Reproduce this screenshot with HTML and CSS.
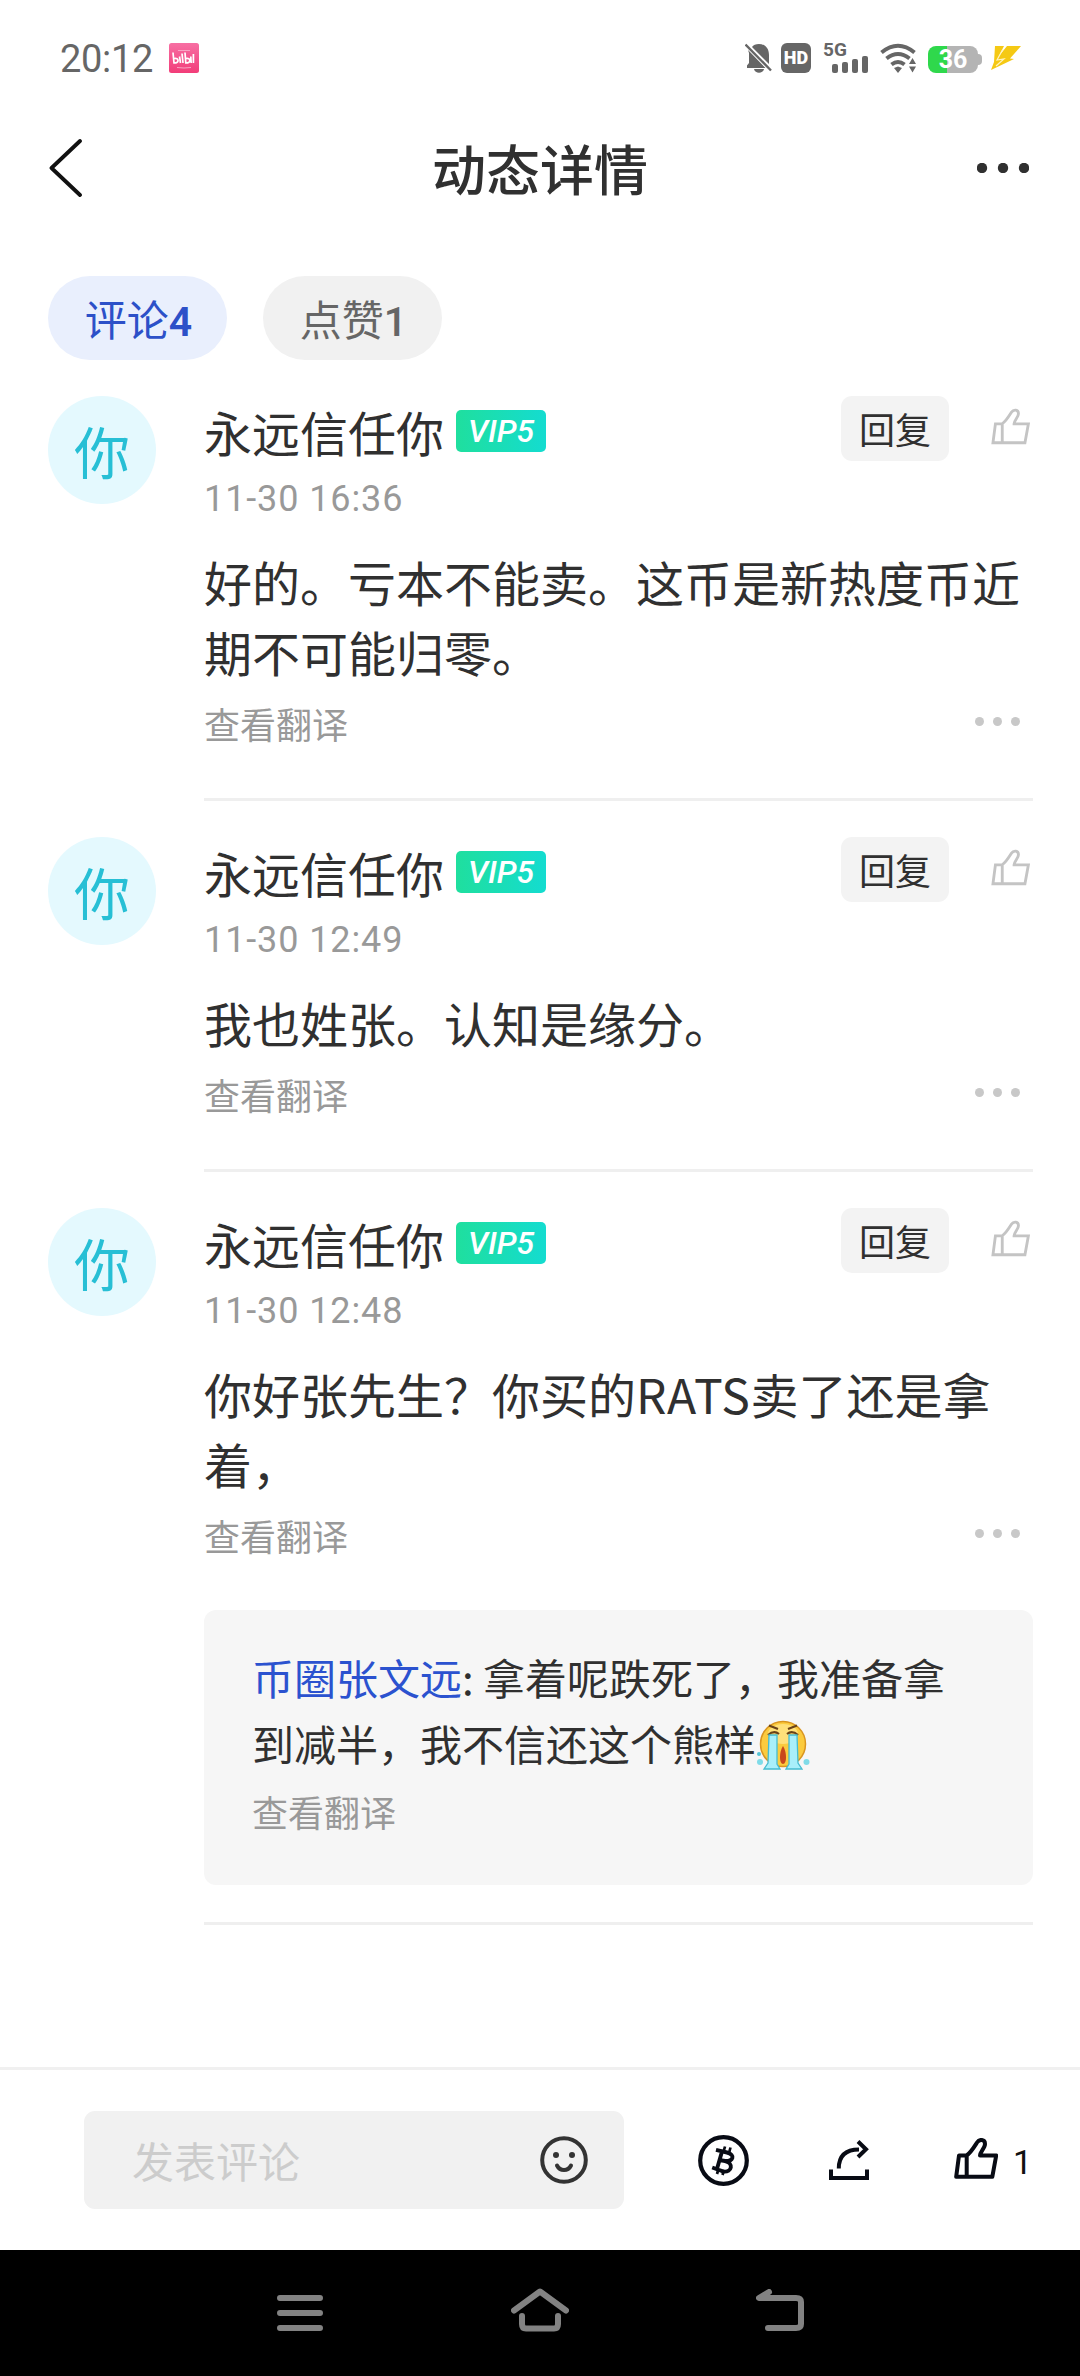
FILE: index.html
```html
<!DOCTYPE html>
<html lang="zh-CN">
<head>
<meta charset="utf-8">
<title>动态详情</title>
<link rel="stylesheet" href="styles.css">
</head>
<body>
<svg class="defs" aria-hidden="true">
  <symbol id="thumb" viewBox="0 0 44 41">
    <path d="M5 17.5 2.2 38.8H38.3L42.2 17.5H26C26 14 31 10 31 6 31 1.200 25.500.700 23 4.500 19.500 10 16.500 15 12.500 17.500ZM12.700 18V38.500"/>
  </symbol>
  <symbol id="dots" viewBox="0 0 45 9">
    <circle cx="4.500" cy="4.500" r="4.500"/><circle cx="22.500" cy="4.500" r="4.500"/><circle cx="40.500" cy="4.500" r="4.500"/>
  </symbol>
</svg>
<div class="screen">
  <header class="status">
    <span class="clock">20:12</span>
    <svg class="bili" viewBox="0 0 30 30"><defs><linearGradient id="pk" x2="0" y2="1"><stop stop-color="#f76fa3"/><stop offset="1" stop-color="#f23d79"/></linearGradient></defs><rect width="30" height="30" rx="2.500" fill="url(#pk)"/><path d="M9 7.500h12M8 24.500q7 1 14 0" stroke="#f9a3c3" fill="none"/><path d="M4 9.500 5 20q4 0 4-2.500T5.200 15.500M10.500 13.500 11.500 20M13 10.500 14 20M16 9.500l.8 10.500q4 0 4-2.500t-3.800-2M21.800 13.500l.4 6.500M24.400 11v9" stroke="#fff" stroke-width="1.700" fill="none"/></svg>
    <div class="indicators">
      <svg width="27" height="30" viewBox="0 0 27 30"><path d="M3 7 20.500 25H2v-2.500L4 20V10ZM7 4C10-1 24-1 24 12v9ZM9 26h10c-1 5-9 5-10 0Z" fill="#666"/><path d="M.5 1.500 26 27.500" stroke="#666" stroke-width="2.400"/></svg>
      <span class="hd">HD</span>
      <div class="net"><span>5G</span><svg width="36" height="17" viewBox="0 0 36 17"><g fill="#666"><rect y="8" width="6" height="9" rx="2"/><rect x="10" y="6" width="6" height="11" rx="2"/><rect x="20" y="3" width="6" height="14" rx="2"/><rect x="30" width="6" height="17" rx="2"/></g></svg></div>
      <svg class="wifi" width="37" height="30" viewBox="0 0 37 30"><g fill="none" stroke="#666" stroke-width="4"><path d="M1.500 9.500Q18-4 34.500 9.500M6.500 15.500q11.500-9 23 0M11.500 21.500q6.500-5 13 0"/></g><path d="m14 25 4-1.500 4 1.500-4 5ZM29 21l3.500-6L36 21ZM29 23.500h7L32.500 29.500Z" fill="#666"/></svg>
      <div class="battery"><span>36</span></div>
      <svg class="bolt" width="30" height="24" viewBox="0 0 30 24"><path d="M4 0h9L8 10 16 0h14L19 12.500l4 .5L0 24 3 16Z" fill="#f5c914"/><path d="M12 3 6 14l7-1-8 7" fill="none" stroke="#fff3c0" stroke-width="1.200"/></svg>
    </div>
  </header>

  <nav class="topbar">
    <svg width="34" height="58" viewBox="0 0 34 58"><path d="M31 2 2.500 29 31 56" fill="none" stroke="#111" stroke-width="3.800" stroke-linecap="round" stroke-linejoin="round"/></svg>
    <h1>动态详情</h1>
    <svg class="more" width="52" height="10" viewBox="0 0 52 10"><circle cx="5" cy="5" r="5.200"/><circle cx="26" cy="5" r="5.200"/><circle cx="47" cy="5" r="5.200"/></svg>
  </nav>

  <div class="tabs">
    <div class="tab active">评论<b>4</b></div>
    <div class="tab">点赞<b>1</b></div>
  </div>

  <main class="comments">
    <article class="comment">
      <div class="avatar">你</div>
      <div class="content">
        <div class="head">
          <div class="name">永远信任你</div><span class="vip">VIP5</span>
          <button class="reply">回复</button>
          <svg class="like"><use href="#thumb"/></svg>
        </div>
        <div class="date">11-30 16:36</div>
        <p class="text">好的。亏本不能卖。这币是新热度币近期不可能归零。</p>
        <div class="foot"><span>查看翻译</span><svg class="opts"><use href="#dots"/></svg></div>
      </div>
    </article>
    <article class="comment">
      <div class="avatar">你</div>
      <div class="content">
        <div class="head">
          <div class="name">永远信任你</div><span class="vip">VIP5</span>
          <button class="reply">回复</button>
          <svg class="like"><use href="#thumb"/></svg>
        </div>
        <div class="date">11-30 12:49</div>
        <p class="text">我也姓张。认知是缘分。</p>
        <div class="foot"><span>查看翻译</span><svg class="opts"><use href="#dots"/></svg></div>
      </div>
    </article>
    <article class="comment">
      <div class="avatar">你</div>
      <div class="content threaded">
        <div class="head">
          <div class="name">永远信任你</div><span class="vip">VIP5</span>
          <button class="reply">回复</button>
          <svg class="like"><use href="#thumb"/></svg>
        </div>
        <div class="date">11-30 12:48</div>
        <p class="text">你好张先生？你买的<span class="latin">RATS</span>卖了还是拿着，</p>
        <div class="foot"><span>查看翻译</span><svg class="opts"><use href="#dots"/></svg></div>
        <div class="thread">
          <p><a>币圈张文远</a>: 拿着呢跌死了，我准备拿<br>到减半，我不信还这个熊样<svg class="cry" viewBox="0 0 54 50"><circle cx="27" cy="24" r="22.500" fill="#fbcb3e" stroke="#d99520" stroke-width="1.500"/><ellipse cx="27" cy="14" rx="15" ry="10" fill="#ffe07a"/><path d="M13 5.500 22 9M41 5.500 32 9M12 15q6-5 11-1M42 15q-6-5-11-1" fill="none" stroke="#6b4318" stroke-width="2.200"/><path d="M27 26c-4 6-4 18 0 18s4-12 0-18Z" fill="#c8471c"/><path d="M13 15h8v29l3 5H8l4-6Zm20 0h8l1 28 4 6H30l3-5Z" fill="#a9effa" stroke="#45bcd0" stroke-width="1.300"/><circle cx="3" cy="34" r="2" fill="#54c5d6"/><circle cx="4" cy="42" r="3" fill="#7fdbe8"/><circle cx="50.500" cy="42" r="3" fill="#7fdbe8"/></svg></p>
          <span class="translate">查看翻译</span>
        </div>
      </div>
    </article>
  </main>

  <footer class="composer">
    <div class="input"><span>发表评论</span>
      <svg width="48" height="48" viewBox="0 0 48 48"><g fill="none" stroke="#333" stroke-width="4"><circle cx="24" cy="24" r="21.800"/><path d="M17 29.500c3 6 11 6 14 0" stroke-linecap="round"/></g><circle cx="16" cy="19" r="3" fill="#333"/><circle cx="32" cy="19" r="3" fill="#333"/></svg>
    </div>
    <svg class="btc" viewBox="0 0 51 51"><g fill="none" stroke="#080b14"><circle cx="25.500" cy="25.500" r="23.300" stroke-width="4.200"/><path d="M18 14.800 29 17.500C38 20 35 26.500 27 26 36 28 34 37.500 25.500 36.500L14.200 32.500M24 16.500 18.800 34.500M21.500 25 27 26" stroke-width="3.900"/><path d="M27 11.500 25.500 17M32.500 12.500 31 18M20.500 34 19 39M26 35 24.500 40" stroke-width="2.700"/></g></svg>
    <svg class="share" viewBox="0 0 40 40"><path d="M2 29.500V38H38V29.500M9.800 28.500C9.800 16 16 9.500 30 9.500" fill="none" stroke="#080b14" stroke-width="4"/><path d="M29 1.500 37 9.300 29 17" fill="none" stroke="#080b14" stroke-width="4"/></svg>
    <svg class="thumb"><use href="#thumb"/></svg>
    <span class="count">1</span>
  </footer>

  <div class="sysnav">
    <svg width="46" height="36" viewBox="0 0 46 36"><path d="M3 3H43M3 18H43M3 33H43"/></svg>
    <svg class="raised" width="58" height="44" viewBox="0 0 58 44"><path d="M3 22.500 29 3.500 55 22.500M11 28V36Q11 40.500 15 40.500H43Q47 40.500 47 36V28"/></svg>
    <svg class="raised" width="48" height="42" viewBox="0 0 48 42"><path d="M13 3 3 9H40Q45 9 45 13V35Q45 39 40 39H12"/></svg>
  </div>
</div>
</body>
</html>
```
FILE: styles.css
```css
* { box-sizing: border-box; }
body {
  margin: 0;
  background: #fff;
  color: #303030;
  font-family: "Noto Sans CJK SC", sans-serif;
}
p, h1 { margin: 0; }
svg { flex: none; }
.defs { position: absolute; width: 0; height: 0; }
.screen { display: flex; flex-direction: column; width: 1080px; height: 2376px; }

/* status bar */
.status { display: flex; align-items: center; height: 116px; padding: 0 59px 0 60px; }
.clock { width: 109px; padding-top: 2px; font: 400 38px/40px Roboto, sans-serif; letter-spacing: -.3px; color: #666; }
.bili { width: 30px; height: 30px; }
.indicators { display: flex; align-items: center; margin-left: auto; }
.hd {
  width: 30px; height: 30px; margin-left: 9px; border-radius: 6px;
  background: #666; color: #fff; text-align: center;
  font: 900 18px/30px Roboto, sans-serif;
}
.net { display: flex; flex-direction: column; width: 45px; height: 30px; margin-left: 12px; color: #666; }
.net span { height: 13px; font: 700 19px/14px Roboto, sans-serif; }
.net svg { margin-left: 9px; }
.wifi { margin-left: 12px; }
.battery {
  position: relative; width: 50px; height: 27px; margin: 3px 13px 0 11px; border-radius: 8px;
  background: linear-gradient(90deg, #2fd84c 19px, #b4b4b4 19px);
  color: #fff; text-align: center; font: 700 25px/28px Roboto, sans-serif;
}
.battery::after {
  content: ""; position: absolute; left: 50px; top: 8px; width: 4px; height: 11px;
  border-radius: 0 4px 4px 0; background: #b4b4b4;
}

/* title bar */
.topbar { display: flex; align-items: center; justify-content: space-between; height: 104px; padding: 0 51px 0 49px; }
.topbar h1 { font-size: 54px; line-height: 80px; font-weight: 500; margin-left: 20px; }
.more { fill: #303030; }

/* tabs */
.tabs { display: flex; gap: 36px; height: 176px; padding: 56px 48px 0; }
.tab {
  width: 179px; height: 84px; border-radius: 42px; background: #f1f1f1; color: #666;
  font-size: 42px; line-height: 83px; text-align: center;
}
.tab b { font-family: Roboto, sans-serif; font-weight: 500; font-size: 41px; letter-spacing: -2px; }
.tab.active { background: #e9effd; color: #2c50c8; }
.tab.active b { font-weight: 600; }

/* comment list */
.comments { flex: 1; padding: 0 47px 0 48px; }
.comment { display: grid; grid-template-columns: 108px 1fr; gap: 48px; margin-bottom: 36px; }
.avatar {
  width: 108px; height: 108px; border-radius: 50%; background: #e4f9fe; color: #27bfd5;
  font-size: 56px; line-height: 108px; text-align: center;
}
.content { border-bottom: 3px solid #efefef; padding-bottom: 51px; }
.content.threaded { padding-bottom: 37px; }
.head { display: flex; height: 72px; }
.name { font-size: 48px; line-height: 70px; }
.vip {
  width: 90px; height: 42px; margin: 14px 0 0 12px; border-radius: 5px;
  background: linear-gradient(90deg, #1fdf9e, #14dcd0); color: #fff; text-align: center;
  font: italic 500 32px/43px Roboto, sans-serif;
}
.reply {
  width: 108px; height: 65px; margin-left: auto; padding: 0; border: 0; border-radius: 11px;
  background: #f3f3f3; color: #303030; font: 36px/65px "Noto Sans CJK SC", sans-serif;
}
.like { width: 39px; height: 37px; margin: 12px 3px 0 42px; fill: none; stroke: #c4c4c4; stroke-width: 3.200; }
.date { margin-top: 11px; font: 400 36px/40px Roboto, sans-serif; letter-spacing: .9px; color: #999; }
.text { margin-top: 27px; font-size: 48px; line-height: 70px; }
.latin { letter-spacing: .7px; }
.foot { display: flex; justify-content: space-between; margin-top: 13px; font-size: 36px; line-height: 48px; color: #999; }
.opts { width: 45px; height: 9px; margin: 18px 13px 0 0; fill: #c8c8c8; }
.thread { margin-top: 51px; padding: 34px 48px 50px; border-radius: 12px; background: #f6f6f6; }
.thread p { font-size: 42px; line-height: 66px; }
.thread a { color: #2b52cf; }
.cry { width: 54px; height: 50px; vertical-align: -9px; }
.translate { display: block; margin-top: 11px; font-size: 36px; line-height: 48px; color: #999; }

/* composer */
.composer {
  display: flex; align-items: center; height: 183px; padding: 0 48px 0 84px;
  border-top: 3px solid #f0f0f0;
}
.input {
  display: flex; align-items: center; justify-content: space-between;
  width: 540px; height: 98px; padding: 0 36px 0 48px; border-radius: 11px;
  background: #f1f1f1; color: #ccc; font-size: 42px; line-height: 98px;
}
.btc { width: 51px; height: 51px; margin-left: 74px; }
.share { width: 40px; height: 40px; margin-left: 80px; }
.thumb { width: 44px; height: 41px; margin: -4px 0 0 85px; fill: none; stroke: #080b14; stroke-width: 4; stroke-linejoin: round; }
.count { margin-left: 15px; padding-top: 4px; color: #111; font: 400 34px/40px Roboto, sans-serif; }

/* system navigation */
.sysnav { display: flex; align-items: center; justify-content: space-between; height: 126px; padding: 0 276px 0 277px; background: #000; }
.sysnav path { fill: none; stroke: #828282; stroke-width: 6; stroke-linecap: round; stroke-linejoin: round; }
.raised { margin-top: -6px; }
```
